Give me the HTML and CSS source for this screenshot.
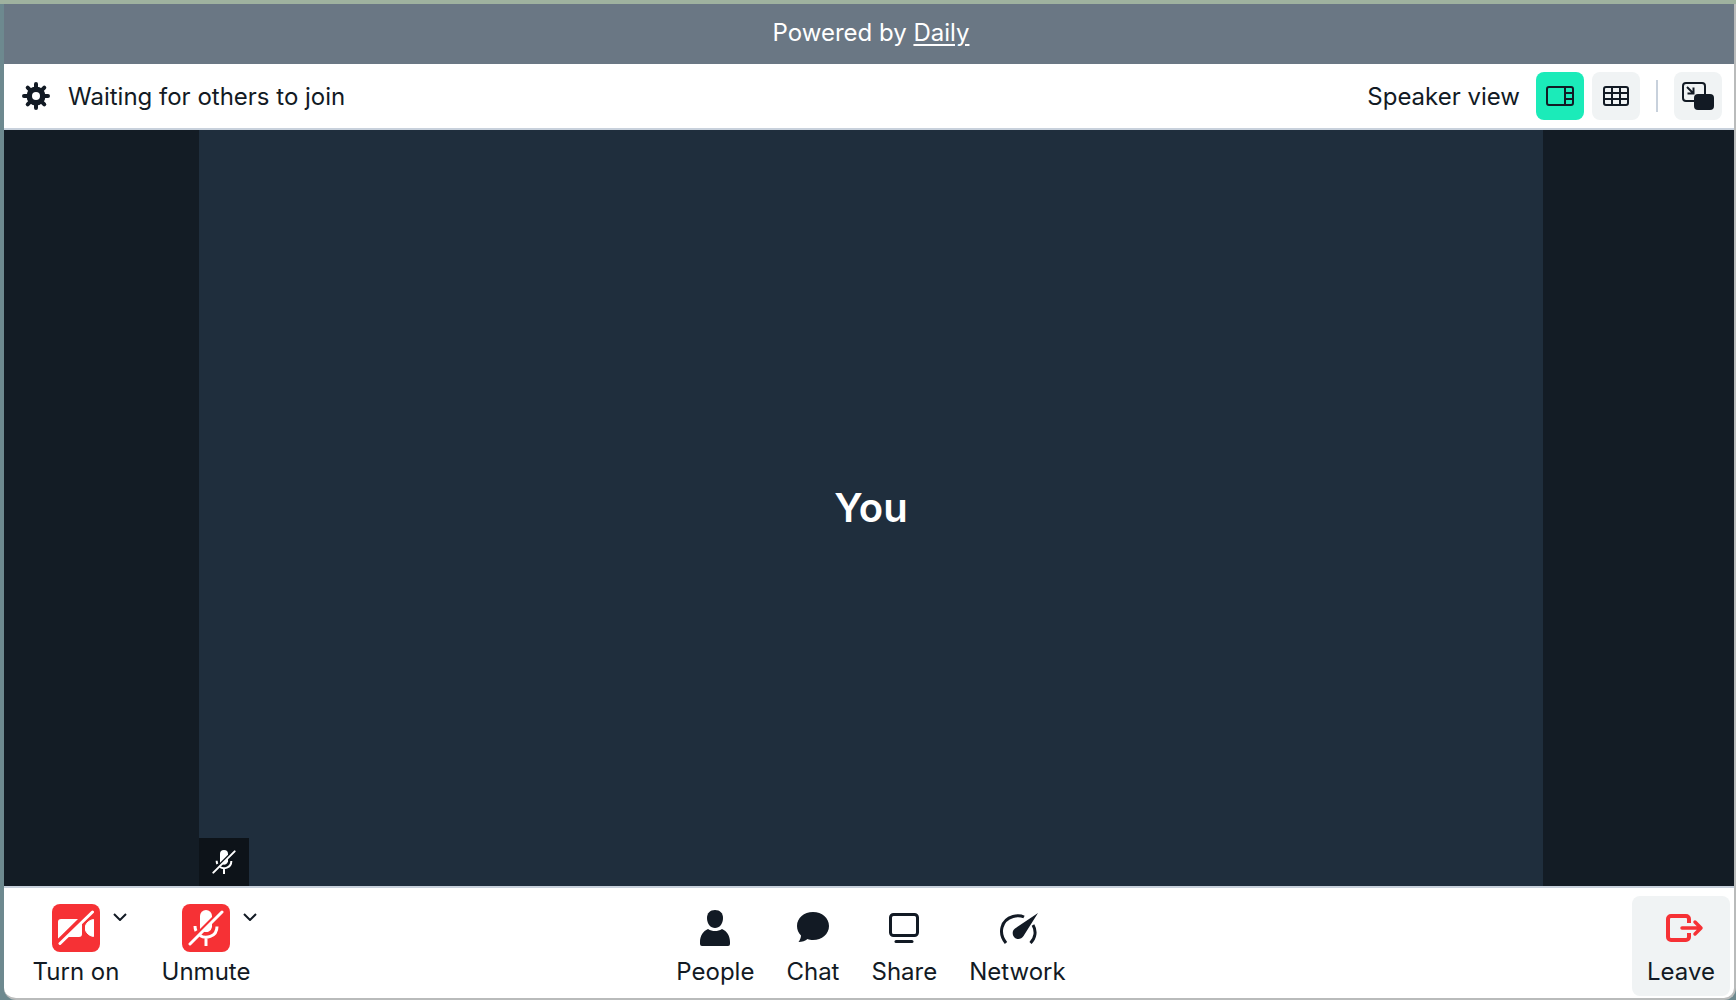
FILE: index.html
```
<!DOCTYPE html>
<html lang="en">
	<head>
		<meta charset="UTF-8">
		<meta name="viewport" content="width=device-width, initial-scale=1">
		<title>Daily</title>
		<link rel="stylesheet" href="styles.css">
	</head>
	<body>
		<div class="call">
			<div class="banner">Powered by <a href="#">Daily</a></div>
			<header class="topbar">
				<button type="button" class="settings" aria-label="Settings">
					<svg width="28" height="28" viewBox="0 0 28 28">
						<g stroke="currentColor" stroke-width="4" stroke-linecap="round">
							<path d="M14 2v24M2 14h24M5.7 5.7l16.6 16.6M22.3 5.7L5.7 22.3"/>
						</g>
						<circle cx="14" cy="14" r="9.5" fill="currentColor"/>
						<circle cx="14" cy="14" r="4" fill="#fff"/>
					</svg>
				</button>
				<span class="status">Waiting for others to join</span>
				<span class="view-name">Speaker view</span>
				<div class="views">
					<button type="button" class="square active" aria-label="Speaker view">
						<svg width="28" height="20" viewBox="0 0 28 20" fill="none" stroke="currentColor" stroke-width="2">
							<rect x="1" y="1" width="26" height="18" rx="2"/>
							<path d="M19 1v18M19 7h8M19 13h8"/>
						</svg>
					</button>
					<button type="button" class="square" aria-label="Grid view">
						<svg width="26" height="20" viewBox="0 0 26 20" fill="none" stroke="currentColor" stroke-width="2">
							<rect x="1" y="1" width="24" height="18" rx="2"/>
							<path d="M9 1v18M17 1v18M1 7h24M1 13h24"/>
						</svg>
					</button>
				</div>
				<span class="divider"></span>
				<button type="button" class="square" aria-label="Picture in picture">
					<svg width="32" height="28" viewBox="0 0 32 28" fill="none" stroke="currentColor" stroke-width="2">
						<path d="M12 19H4a3 3 0 0 1-3-3V4a3 3 0 0 1 3-3h16a3 3 0 0 1 3 3v8"/>
						<path d="M5 5l6 6M11.500 5.500v6h-6"/>
						<rect x="12" y="12" width="20" height="16" rx="4" fill="currentColor" stroke="none"/>
					</svg>
				</button>
			</header>
			<main class="stage">
				<div class="tile">
					<h1>You</h1>
					<span class="muted">
						<svg width="24" height="26" viewBox="-1 0 36 38">
							<use href="#mic-off"/>
						</svg>
					</span>
				</div>
			</main>
			<footer class="tray">
				<div class="devices">
					<div class="device">
						<button type="button" class="control">
							<span class="icon off">
								<svg width="38" height="36" viewBox="0 0 38 36" fill="currentColor">
									<path d="M4 9h17L1.200 28.500A3 3 0 0 1 1 27V12a3 3 0 0 1 3-3z"/>
									<path d="M25 13v11a3 3 0 0 1-3 3H10.500z"/>
									<path d="M28.500 15.500C30 12 33 10 36.500 9.500v17c-3.500-.5-6.500-2.500-8-6z" stroke="currentColor" stroke-linejoin="round"/>
									<path d="M3 33.500L35.500 2" fill="none" stroke="currentColor" stroke-width="3" stroke-linecap="round"/>
								</svg>
							</span>
							<span>Turn on</span>
						</button>
						<button type="button" class="more" aria-label="Camera options">
							<svg width="14" height="8" viewBox="0 0 14 8" fill="none" stroke="currentColor" stroke-width="2">
								<path d="M1 1l6 6 6-6"/>
							</svg>
						</button>
					</div>
					<div class="device">
						<button type="button" class="control">
							<span class="icon off">
								<svg width="36" height="38" viewBox="-1 0 36 38">
									<g id="mic-off" fill="none" stroke="currentColor">
										<path d="M17 1a6 6 0 0 1 6 6v1L11 20V7a6 6 0 0 1 6-6z" fill="currentColor" stroke="none"/>
										<path d="M23 13v5a6 6 0 0 1-8.500 4.500z" fill="currentColor" stroke="none"/>
										<path d="M6 17c0 2 .3 3.600 1 5M11 26.500c5 3.500 17 2 17-9M17 28v9" stroke-width="3"/>
										<path d="M1 35L33 3" stroke-width="3" stroke-linecap="round"/>
									</g>
								</svg>
							</span>
							<span>Unmute</span>
						</button>
						<button type="button" class="more" aria-label="Microphone options">
							<svg width="14" height="8" viewBox="0 0 14 8" fill="none" stroke="currentColor" stroke-width="2">
								<path d="M1 1l6 6 6-6"/>
							</svg>
						</button>
					</div>
				</div>
				<div class="actions">
					<button type="button" class="control">
						<span class="icon">
							<svg width="30" height="36" viewBox="0 0 30 36" fill="currentColor">
								<path d="M15 0c5 0 8 3 8 8 0 6-3.500 10-8 10s-8-4-8-10c0-5 3-8 8-8z"/>
								<path d="M8 19c4.500 2.700 9.500 2.700 14 0 5 2 8 7 8 13v2a2 2 0 0 1-2 2H2a2 2 0 0 1-2-2v-2c0-6 3-11 8-13z"/>
							</svg>
						</span>
						<span>People</span>
					</button>
					<button type="button" class="control">
						<span class="icon">
							<svg width="32" height="32" viewBox="0 0 32 32" fill="currentColor">
								<path d="M16 0c9 0 16 6 16 14s-7 14-16 14c-2 0-4-.3-5.500-1C8.500 29 5 30 1.500 30 3 28 4 25.500 4 23.500 1.500 21 0 18 0 14 0 6 7 0 16 0z"/>
							</svg>
						</span>
						<span>Chat</span>
					</button>
					<button type="button" class="control">
						<span class="icon">
							<svg width="30" height="30" viewBox="0 0 30 30" fill="none" stroke="currentColor" stroke-width="3">
								<rect x="1.500" y="1.500" width="27" height="21" rx="3"/>
								<path d="M7 28.500h16" stroke-linecap="round"/>
							</svg>
						</span>
						<span>Share</span>
					</button>
					<button type="button" class="control">
						<span class="icon">
							<svg width="42" height="31" viewBox="-4 0 42 31">
								<path d="M6 30C-2 20 1 7 13 3.500c4-1.200 8-1 11 .5M33 12c3.500 6 2.500 13-2.500 18" fill="none" stroke="currentColor" stroke-width="3"/>
								<path d="M38 0L23.500 23c-2 3.500-6.500 4-9 1.500s-2.500-7 .5-9z" fill="currentColor"/>
							</svg>
						</span>
						<span>Network</span>
					</button>
				</div>
				<button type="button" class="control leave">
					<span class="icon">
						<svg width="46" height="28" viewBox="-8 0 46 28" fill="none" stroke="currentColor" stroke-width="4">
							<path d="M23 9V5a3 3 0 0 0-3-3H5a3 3 0 0 0-3 3v18a3 3 0 0 0 3 3h15a3 3 0 0 0 3-3v-4"/>
							<path d="M16 14h18M29 8l6 6-6 6" stroke-width="3.500" stroke-linecap="round" stroke-linejoin="round"/>
						</svg>
					</span>
					<span>Leave</span>
				</button>
			</footer>
		</div>
	</body>
</html>
```
FILE: styles.css
```
*{margin:0;padding:0;box-sizing:border-box;}
body{
	display: flex;
	height: 100vh;
	padding: 4px 0 0 4px;
	background: linear-gradient(#9fb29f 4px, #6d898f 4px);
	color: #121a24;
	font: 24px/28px Inter, "Liberation Sans", sans-serif;
}
button{
	border: 0;
	background: none;
	color: inherit;
	font: inherit;
	cursor: pointer;
}
a{color: inherit;text-underline-offset: 3px;}
svg{display: block;}

.call{
	flex: 1;
	display: flex;
	flex-direction: column;
	overflow: hidden;
	border: solid #b9bbbb;
	border-width: 0 2px 2px 0;
	border-radius: 0 0 12px 12px;
	background: #fff;
}
.banner{
	padding: 15px 0 17px 4px;
	background: #6a7784;
	color: #fff;
	text-align: center;
}

/* top bar */
.topbar{
	display: flex;
	align-items: center;
	padding: 8px 12px 8px 18px;
	border-bottom: 2px solid #c8d1dc;
}
.status{
	flex: 1;
	margin-left: 18px;
}
.status,
.view-name{
	padding-top: 2px;
}
.views{
	display: flex;
	gap: 8px;
	margin-left: 16px;
}
.square{
	display: flex;
	align-items: center;
	justify-content: center;
	width: 48px;
	height: 48px;
	border-radius: 8px;
	background: #f0f3f4;
}
.square.active{
	background: #1bebb9;
}
.divider{
	width: 2px;
	height: 32px;
	margin: 0 16px;
	background: #c8d1dc;
}

/* video */
.stage{
	flex: 1;
	display: flex;
	justify-content: center;
	min-height: 0;
	padding-left: 4px;
	background: #131c25;
}
.tile{
	position: relative;
	display: flex;
	align-items: center;
	justify-content: center;
	aspect-ratio: 16 / 9;
	background: #1f2e3d;
	color: #fff;
}
.tile h1{
	font-size: 40px;
	line-height: 48px;
	font-weight: 600;
}
.muted{
	position: absolute;
	left: 0;
	bottom: 0;
	display: flex;
	align-items: center;
	justify-content: center;
	width: 50px;
	height: 48px;
	background: #0d1319;
}

/* tray */
.tray{
	display: grid;
	grid-template-columns: 1fr auto 1fr;
	padding: 8px 4px 2px 8px;
	border-top: 2px solid #c8d1dc;
}
.devices{
	display: flex;
	gap: 26px;
	padding-left: 16px;
}
.device{
	display: flex;
	align-items: flex-start;
}
.device .control{
	width: 96px;
}
.actions{
	display: flex;
	gap: 32px;
}
.control{
	display: flex;
	flex-direction: column;
	align-items: center;
	gap: 6px;
	padding: 8px 0 10px;
	white-space: nowrap;
}
.icon{
	display: flex;
	align-items: center;
	justify-content: center;
	width: 48px;
	height: 48px;
}
.icon.off{
	border-radius: 8px;
	background: #f63135;
	color: #fff;
}
.more{
	display: flex;
	justify-content: center;
	width: 24px;
	margin-left: -16px;
	padding: 17px 0;
}
.leave{
	justify-self: end;
	width: 98px;
	border-radius: 8px;
	background: #f0f3f4;
}
.leave .icon{
	color: #f63135;
}
```
